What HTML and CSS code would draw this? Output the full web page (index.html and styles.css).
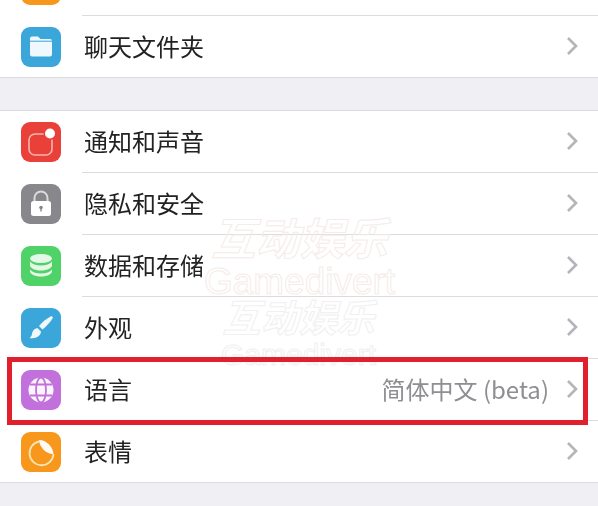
FILE: index.html
```html
<!DOCTYPE html>
<html lang="zh-CN">
<head>
    <meta charset="UTF-8">
    <meta name="viewport" content="width=device-width, initial-scale=1.0">
    <title>设置</title>
    <link rel="stylesheet" href="styles.css">
</head>
<body>
    <div class="page">
        <div class="group group-first">
            <div class="row">
                <div class="icon orange"></div>
                <span class="label">贴纸</span>
                <svg class="chevron" viewBox="0 0 12 20"><polyline points="2,2 10,10 2,18"/></svg>
            </div>
            <div class="row">
                <div class="icon blue">
                    <svg viewBox="0 0 40 40"><path d="M9 11.500q0-2 2-2h6l2.500 2.500h9.500q2 0 2 2v13.500q0 2-2 2h-18q-2 0-2-2z" fill="#fff" fill-opacity=".92"/><path d="M9 14.200h22" stroke="#3ba6da" stroke-width="1"/></svg>
                </div>
                <span class="label">聊天文件夹</span>
                <svg class="chevron" viewBox="0 0 12 20"><polyline points="2,2 10,10 2,18"/></svg>
            </div>
        </div>

        <div class="group">
            <div class="row">
                <div class="icon red">
                    <svg viewBox="0 0 40 40"><rect x="8" y="12" width="23" height="21" rx="6" fill="none" stroke="#f6b5ae" stroke-width="1.600"/><circle cx="29" cy="11.500" r="6.500" fill="#e9403a"/><circle cx="29" cy="11.500" r="5" fill="#fff"/></svg>
                </div>
                <span class="label">通知和声音</span>
                <svg class="chevron" viewBox="0 0 12 20"><polyline points="2,2 10,10 2,18"/></svg>
            </div>
            <div class="row">
                <div class="icon gray">
                    <svg viewBox="0 0 40 40"><path d="M13.500 18v-4a6.500 6.500 0 0 1 13 0v4" fill="none" stroke="#fff" stroke-opacity=".7" stroke-width="2"/><rect x="10" y="17" width="20" height="15" rx="2.500" fill="#fff"/><circle cx="20" cy="23.500" r="1.800" fill="#87878c"/><rect x="19.300" y="23.500" width="1.400" height="4" fill="#87878c"/></svg>
                </div>
                <span class="label">隐私和安全</span>
                <svg class="chevron" viewBox="0 0 12 20"><polyline points="2,2 10,10 2,18"/></svg>
            </div>
            <div class="row">
                <div class="icon green">
                    <svg viewBox="0 0 40 40" fill="#fff" fill-opacity=".85"><ellipse cx="20" cy="12.500" rx="11" ry="4.500"/><path d="M9 15.500c2 2.800 6 4 11 4s9-1.200 11-4v4.500c-1.500 3-6 4.500-11 4.500s-9.500-1.500-11-4.500z"/><path d="M9 23.500c2 2.800 6 4 11 4s9-1.200 11-4v2.500c-1.500 3-6 4.500-11 4.500s-9.500-1.500-11-4.500z"/></svg>
                </div>
                <span class="label">数据和存储</span>
                <svg class="chevron" viewBox="0 0 12 20"><polyline points="2,2 10,10 2,18"/></svg>
            </div>
            <div class="row">
                <div class="icon blue">
                    <svg viewBox="0 0 40 40" fill="#fff" fill-opacity=".92"><path d="M29.500 8.500c1.500-1 3 .5 2 2-2.500 4-6 7.800-10 11l-3.500-3.500c3.200-4 7.500-7.200 11.500-9.500z"/><path d="M16.500 20l3.500 3.500c-.3 4.500-4.500 7.500-11.500 6.500 2.500-1.500 2-3.500 3-6 .8-2.200 2.800-3.800 5-4z"/></svg>
                </div>
                <span class="label">外观</span>
                <svg class="chevron" viewBox="0 0 12 20"><polyline points="2,2 10,10 2,18"/></svg>
            </div>
            <div class="row">
                <div class="icon purple">
                    <svg viewBox="0 0 40 40"><circle cx="20" cy="20" r="12.500" fill="#fff" fill-opacity=".92"/><g fill="none" stroke="#c270dc" stroke-width="1.800"><ellipse cx="20" cy="20" rx="5" ry="12.500"/><path d="M9 14.500h22M9 25.500h22"/></g></svg>
                </div>
                <span class="label">语言</span>
                <span class="value">简体中文 (beta)</span>
                <svg class="chevron" viewBox="0 0 12 20"><polyline points="2,2 10,10 2,18"/></svg>
            </div>
            <div class="row">
                <div class="icon orange">
                    <svg viewBox="0 0 40 40"><path d="M18 9.500a12 12 0 1 0 14.500 12.500" fill="none" stroke="#fbe3b8" stroke-width="1.800"/><path d="M18 8c6-.5 14 6 14.500 14-7 .5-14-6.500-14.500-14z" fill="#fff" fill-opacity=".95"/></svg>
                </div>
                <span class="label">表情</span>
                <svg class="chevron" viewBox="0 0 12 20"><polyline points="2,2 10,10 2,18"/></svg>
            </div>
        </div>
    </div>

    <div class="mark mark-one">
        <div class="mark-cn">互动娱乐</div>
        <div class="mark-en">Gamedivert</div>
    </div>
    <div class="mark mark-two">
        <div class="mark-cn">互动娱乐</div>
        <div class="mark-en">Gamedivert</div>
    </div>

    <div class="highlight"></div>
</body>
</html>
```

FILE: styles.css
```css
html, body {
    margin: 0;
    height: 100%;
}
body {
    font-family: "Noto Sans CJK SC", "Noto Sans", sans-serif;
    background: #efeff4;
    overflow: hidden;
    position: relative;
}
.page {
    margin-top: -46px;
    filter: blur(0.35px);
}
.group {
    background: #fff;
    border-top: 1px solid #dcdce0;
    border-bottom: 1px solid #dcdce0;
    margin-bottom: 32px;
}
.group-first {
    border-top: 0;
}
.row {
    height: 61px;
    display: flex;
    align-items: center;
    padding: 0 20px 0 21px;
    position: relative;
}
.row + .row {
    border-top: 1px solid #dcdce0;
    margin-left: 82px;
    padding-left: 0;
}
.row + .row .icon {
    margin-left: -61px;
}
.icon {
    width: 40px;
    height: 40px;
    border-radius: 9px;
    flex: none;
    margin-right: 23px;
}
.icon svg {
    display: block;
    width: 40px;
    height: 40px;
}
.orange { background: #f7981d; }
.blue { background: #3ba6da; }
.red { background: #e9403a; }
.gray { background: #87878c; }
.green { background: #4fd267; }
.purple { background: #c270dc; }
.label {
    font-size: 24px;
    line-height: 32px;
    margin-bottom: 2px;
    color: #222;
    white-space: nowrap;
}
.value {
    font-size: 24px;
    line-height: 32px;
    margin-bottom: 2px;
    color: #8e8e93;
    margin-left: auto;
    white-space: nowrap;
}
.chevron {
    width: 12px;
    height: 20px;
    margin-left: auto;
    margin-top: -1px;
    flex: none;
}
.value + .chevron {
    margin-left: 17px;
}
.chevron polyline {
    fill: none;
    stroke: #b4b4b9;
    stroke-width: 2.6;
}
.highlight {
    position: absolute;
    left: 7px;
    top: 357px;
    width: 571px;
    height: 58px;
    border: 5px solid #e1202d;
}
.mark {
    position: absolute;
    color: transparent;
    text-align: center;
    pointer-events: none;
    white-space: nowrap;
}
.mark-one {
    left: 197px;
    top: 208px;
    width: 205px;
    -webkit-text-stroke: 1px #f5ece8;
}
.mark-two {
    left: 216px;
    top: 292px;
    width: 165px;
    -webkit-text-stroke: 1px #f0f0f0;
}
.mark-cn {
    font-size: 44px;
    line-height: 56px;
    font-style: italic;
    font-weight: 700;
}
.mark-en {
    font-family: "Liberation Sans", sans-serif;
}
.mark-one .mark-en {
    font-size: 37px;
    line-height: 36px;
}
.mark-two .mark-cn {
    font-size: 38px;
    line-height: 48px;
}
.mark-two .mark-en {
    font-size: 30px;
    line-height: 30px;
}
```
